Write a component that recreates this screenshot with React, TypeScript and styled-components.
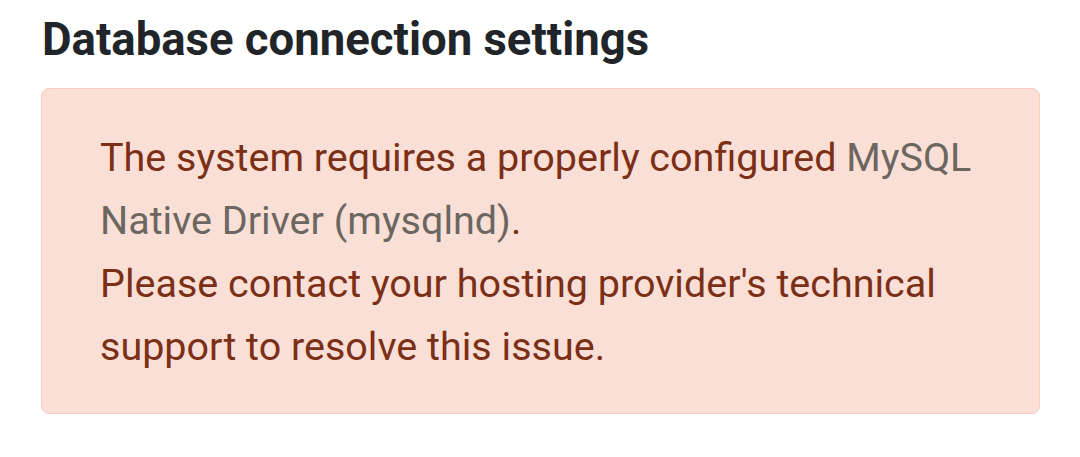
import React from 'react';
import styled, { createGlobalStyle } from 'styled-components';

const GlobalStyle = createGlobalStyle`
  body {
    margin: 0;
    background: #ffffff;
    font-family: Roboto, "Liberation Sans", sans-serif;
  }
`;

//전체 화면
const Page = styled.section`
  padding: 14px 40px 0 41px;
`;

const Heading = styled.h2`
  margin: 0 0 22px 1px;
  font-size: 45.5px;
  line-height: 52px;
  font-weight: 700;
  color: #212529;
`;

const Alert = styled.div`
  box-sizing: border-box;
  width: 999px;
  padding: 37px 58px 35px;
  background: #fadfd6;
  border: 1px solid #f7cdc0;
  border-radius: 8px;
  color: #7b2f16;
  font-size: 39.5px;
  line-height: 63px;
`;

const Muted = styled.span`
  color: #6c6660;
`;

const App = () => {
  return (
    <>
      <GlobalStyle />
      <Page>
        <Heading>Database connection settings</Heading>
        <Alert>
          The system requires a properly configured <Muted>MySQL Native Driver (mysqlnd)</Muted>.
          <br />
          Please contact your hosting provider's technical support to resolve this issue.
        </Alert>
      </Page>
    </>
  );
};
export default App;
